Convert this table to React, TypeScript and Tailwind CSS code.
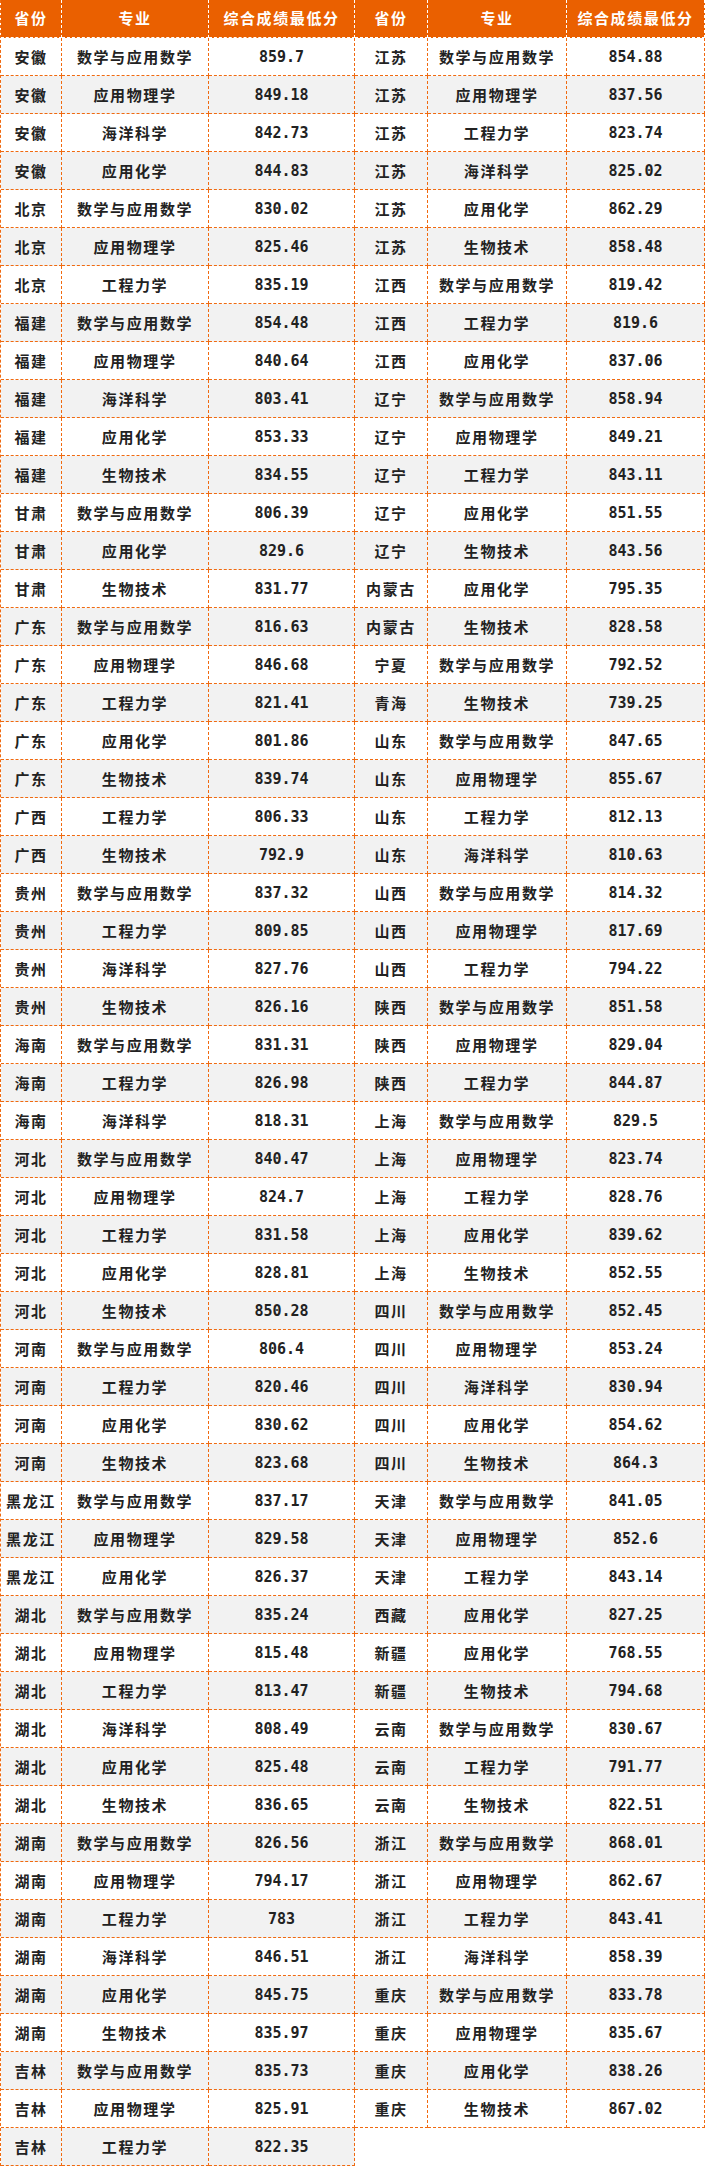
const left = `安徽|数学与应用数学|859.7
安徽|应用物理学|849.18
安徽|海洋科学|842.73
安徽|应用化学|844.83
北京|数学与应用数学|830.02
北京|应用物理学|825.46
北京|工程力学|835.19
福建|数学与应用数学|854.48
福建|应用物理学|840.64
福建|海洋科学|803.41
福建|应用化学|853.33
福建|生物技术|834.55
甘肃|数学与应用数学|806.39
甘肃|应用化学|829.6
甘肃|生物技术|831.77
广东|数学与应用数学|816.63
广东|应用物理学|846.68
广东|工程力学|821.41
广东|应用化学|801.86
广东|生物技术|839.74
广西|工程力学|806.33
广西|生物技术|792.9
贵州|数学与应用数学|837.32
贵州|工程力学|809.85
贵州|海洋科学|827.76
贵州|生物技术|826.16
海南|数学与应用数学|831.31
海南|工程力学|826.98
海南|海洋科学|818.31
河北|数学与应用数学|840.47
河北|应用物理学|824.7
河北|工程力学|831.58
河北|应用化学|828.81
河北|生物技术|850.28
河南|数学与应用数学|806.4
河南|工程力学|820.46
河南|应用化学|830.62
河南|生物技术|823.68
黑龙江|数学与应用数学|837.17
黑龙江|应用物理学|829.58
黑龙江|应用化学|826.37
湖北|数学与应用数学|835.24
湖北|应用物理学|815.48
湖北|工程力学|813.47
湖北|海洋科学|808.49
湖北|应用化学|825.48
湖北|生物技术|836.65
湖南|数学与应用数学|826.56
湖南|应用物理学|794.17
湖南|工程力学|783
湖南|海洋科学|846.51
湖南|应用化学|845.75
湖南|生物技术|835.97
吉林|数学与应用数学|835.73
吉林|应用物理学|825.91
吉林|工程力学|822.35`;

const right = `江苏|数学与应用数学|854.88
江苏|应用物理学|837.56
江苏|工程力学|823.74
江苏|海洋科学|825.02
江苏|应用化学|862.29
江苏|生物技术|858.48
江西|数学与应用数学|819.42
江西|工程力学|819.6
江西|应用化学|837.06
辽宁|数学与应用数学|858.94
辽宁|应用物理学|849.21
辽宁|工程力学|843.11
辽宁|应用化学|851.55
辽宁|生物技术|843.56
内蒙古|应用化学|795.35
内蒙古|生物技术|828.58
宁夏|数学与应用数学|792.52
青海|生物技术|739.25
山东|数学与应用数学|847.65
山东|应用物理学|855.67
山东|工程力学|812.13
山东|海洋科学|810.63
山西|数学与应用数学|814.32
山西|应用物理学|817.69
山西|工程力学|794.22
陕西|数学与应用数学|851.58
陕西|应用物理学|829.04
陕西|工程力学|844.87
上海|数学与应用数学|829.5
上海|应用物理学|823.74
上海|工程力学|828.76
上海|应用化学|839.62
上海|生物技术|852.55
四川|数学与应用数学|852.45
四川|应用物理学|853.24
四川|海洋科学|830.94
四川|应用化学|854.62
四川|生物技术|864.3
天津|数学与应用数学|841.05
天津|应用物理学|852.6
天津|工程力学|843.14
西藏|应用化学|827.25
新疆|应用化学|768.55
新疆|生物技术|794.68
云南|数学与应用数学|830.67
云南|工程力学|791.77
云南|生物技术|822.51
浙江|数学与应用数学|868.01
浙江|应用物理学|862.67
浙江|工程力学|843.41
浙江|海洋科学|858.39
重庆|数学与应用数学|833.78
重庆|应用物理学|835.67
重庆|应用化学|838.26
重庆|生物技术|867.02`;

const parse = (s: string) => s.split("\n").map((l) => l.split("|"));

const cjk = "font-['Noto_Sans_CJK_SC',sans-serif] font-bold tracking-[1.6px]";
const mono = "font-['DejaVu_Sans_Mono','Noto_Sans_CJK_SC',monospace] font-bold text-[15px]";

function Table({ rows, side }: { rows: string[][]; side: "left" | "right" }) {
  const cols =
    side === "left" ? "grid-cols-[61px_147px_146px]" : "grid-cols-[73px_139px_138px]";
  return (
    <div
      className={`${side === "left" ? "w-[355px] border-l" : "w-[350px]"} border-dashed border-[#f06a10]`}
    >
      {/* header */}
      <div className={`grid ${cols} h-[38px] bg-[#ea6000] text-white text-[15px]`}>
        {["省份", "专业", "综合成绩最低分"].map((h) => (
          <div
            key={h}
            className={`${cjk} flex items-center justify-center border-r border-b border-dashed border-white`}
          >
            {h}
          </div>
        ))}
      </div>

      {rows.map((r, i) => (
        <div
          key={i}
          className={`grid ${cols} h-[38px] text-[15px] text-[#222222] ${i % 2 === 1 ? "bg-[#f2f2f2]" : "bg-white"}`}
        >
          <div className={`${cjk} flex items-center justify-center pt-[2px] border-r border-b border-dashed border-[#f06a10]`}>
            {r[0]}
          </div>
          <div className={`${cjk} flex items-center justify-center pt-[2px] border-r border-b border-dashed border-[#f06a10]`}>
            {r[1]}
          </div>
          <div className={`${mono} flex items-center justify-center pt-[2px] border-r border-b border-dashed border-[#f06a10]`}>
            {r[2]}
          </div>
        </div>
      ))}
    </div>
  );
}

export default function App() {
  return (
    <div className="w-[705px] h-[2167px] bg-white flex items-start">
      <Table rows={parse(left)} side="left" />
      <Table rows={parse(right)} side="right" />
    </div>
  );
}
